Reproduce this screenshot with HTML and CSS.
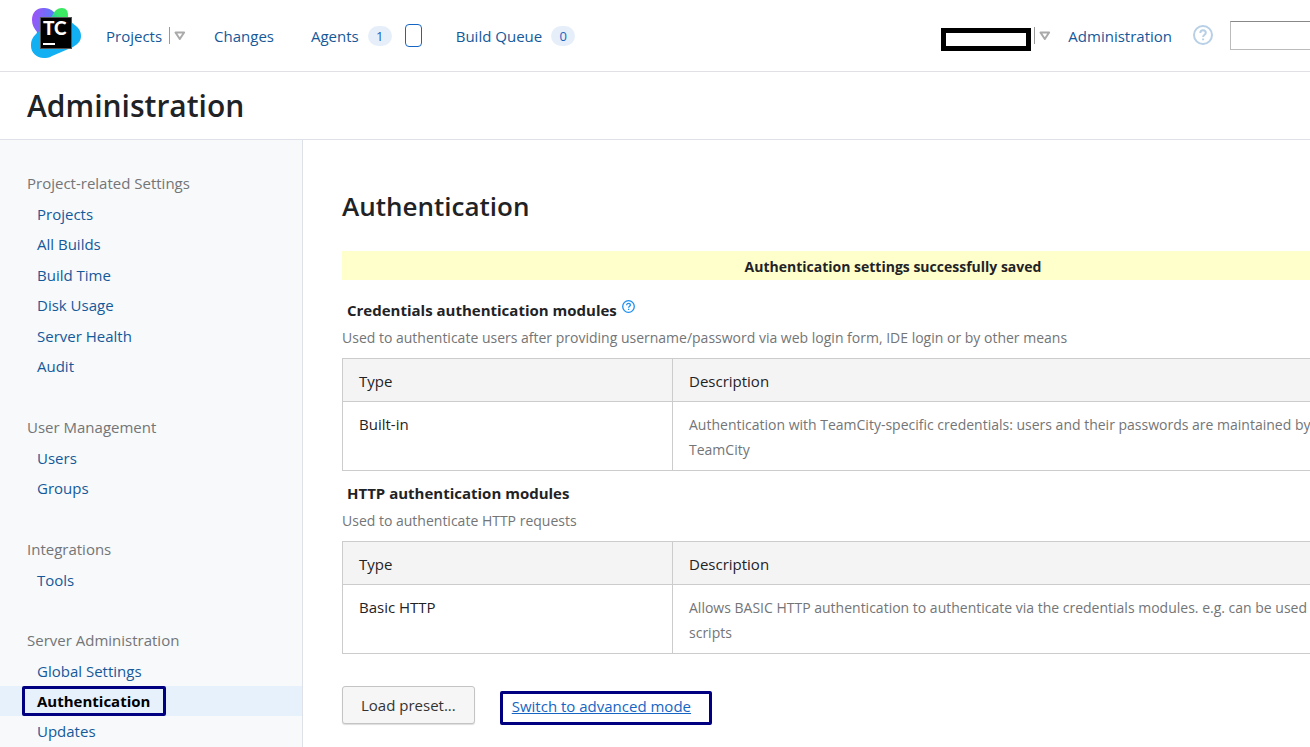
FILE: index.html
```html
<!DOCTYPE html>
<html lang="en">
<head>
<meta charset="utf-8">
<title>Administration - TeamCity</title>
<link rel="stylesheet" href="styles.css">
</head>
<body>
<div class="page">
  <header class="topbar">
    <a class="logo" href="#" aria-label="TeamCity">
      <svg width="52" height="52" viewBox="0 0 52 52">
        <defs>
          <linearGradient id="violet" x1="0" y1="0.3" x2="1" y2="0.6">
            <stop offset="0" stop-color="#9a55f8"/>
            <stop offset="0.6" stop-color="#4b83f6"/>
            <stop offset="1" stop-color="#12a8f2"/>
          </linearGradient>
          <linearGradient id="lime" x1="1" y1="0" x2="0" y2="1">
            <stop offset="0.4" stop-color="#3bea62"/>
            <stop offset="1" stop-color="#12b6e8"/>
          </linearGradient>
        </defs>
        <path d="M2 13C2 5 7 1 13 1c5 0 8 1 12 5l14 12-18 24L6 30l1-5C4 21 2 18 2 13z" fill="url(#violet)"/>
        <path d="M41 15l5 4c4 3 5 7 5 10 0 5-3 8-8 11L22 49c-3 2-6 2-8 2C6 51 1 45 1 39c0-5 1-8 5-12l14-12z" fill="#12aff2"/>
        <path d="M20 12l5-8c2-2 4-3 7-3 4 0 6 3 6 7v10H20z" fill="url(#lime)"/>
        <rect x="10" y="10" width="32" height="32" fill="#555"/>
        <rect x="11" y="11" width="30" height="30"/>
        <path d="M13 36h12v2H13z" fill="#fff"/>
        <text class="logo-text" x="13" y="28">TC</text>
      </svg>
    </a>
    <nav class="nav">
      <div class="nav-item">
        <a href="#">Projects</a>
        <button class="drop" aria-label="Choose a project"><svg width="12" height="10" viewBox="0 0 12 10"><path d="M1.5 1.5h8.6L5.8 8z"/></svg></button>
      </div>
      <a class="nav-item" href="#">Changes</a>
      <a class="nav-item agents" href="#">Agents <span class="count">1</span><span class="slot"></span></a>
      <a class="nav-item" href="#">Build Queue <span class="count">0</span></a>
    </nav>
    <div class="user">
      <span class="username"></span>
      <button class="drop" aria-label="User menu"><svg width="12" height="10" viewBox="0 0 12 10"><path d="M1.5 1.5h8.6L5.8 8z"/></svg></button>
      <a class="admin" href="#">Administration</a>
      <a class="help" href="#" aria-label="Help"><svg width="20" height="20" viewBox="0 0 20 20"><circle cx="10" cy="10" r="9"/><path d="M7.3 8c0-1.8 1-2.8 2.7-2.8s2.8 1 2.8 2.5c0 2-2.7 2-2.7 4.3M10.1 13.4v1.8"/></svg></a>
      <input class="search" type="text" aria-label="Search">
    </div>
  </header>

  <div class="titlebar"><h1>Administration</h1></div>

  <div class="columns">
    <nav class="sidebar" aria-label="Administration sections">
      <section>
        <h2>Project-related Settings</h2>
        <ul>
          <li><a href="#">Projects</a></li>
          <li><a href="#">All Builds</a></li>
          <li><a href="#">Build Time</a></li>
          <li><a href="#">Disk Usage</a></li>
          <li><a href="#">Server Health</a></li>
          <li><a href="#">Audit</a></li>
        </ul>
      </section>
      <section>
        <h2>User Management</h2>
        <ul>
          <li><a href="#">Users</a></li>
          <li><a href="#">Groups</a></li>
        </ul>
      </section>
      <section>
        <h2>Integrations</h2>
        <ul>
          <li><a href="#">Tools</a></li>
        </ul>
      </section>
      <section>
        <h2>Server Administration</h2>
        <ul>
          <li><a href="#">Global Settings</a></li>
          <li class="active"><a href="#">Authentication</a></li>
          <li><a href="#">Updates</a></li>
        </ul>
      </section>
    </nav>

    <main class="content">
      <h2 class="heading">Authentication</h2>
      <div class="message" role="status">Authentication settings successfully saved</div>

      <section class="modules">
        <h3>Credentials authentication modules
          <a class="hint" href="#" aria-label="Help on credentials modules"><svg width="13" height="13" viewBox="0 0 13 13"><circle cx="6.5" cy="6.5" r="5.8"/><path d="M4.7 5.2c0-1.2.7-1.8 1.8-1.8s1.9.6 1.9 1.6c0 1.3-1.8 1.3-1.8 2.7M6.6 8.8v1.2"/></svg></a>
        </h3>
        <p>Used to authenticate users after providing username/password via web login form, IDE login or by other means</p>
        <table>
          <thead><tr><th class="type">Type</th><th>Description</th></tr></thead>
          <tbody><tr><td>Built-in</td><td class="note">Authentication with TeamCity-specific credentials: users and their passwords are maintained by<br>TeamCity</td></tr></tbody>
        </table>
      </section>

      <section class="modules">
        <h3>HTTP authentication modules</h3>
        <p>Used to authenticate HTTP requests</p>
        <table>
          <thead><tr><th class="type">Type</th><th>Description</th></tr></thead>
          <tbody><tr><td>Basic HTTP</td><td class="note">Allows BASIC HTTP authentication to authenticate via the credentials modules. e.g. can be used in<br>scripts</td></tr></tbody>
        </table>
      </section>

      <div class="actions">
        <button class="preset">Load preset...</button>
        <a class="mode" href="#">Switch to advanced mode</a>
      </div>
    </main>
  </div>
</div>
</body>
</html>
```
FILE: styles.css
```css
* { box-sizing: border-box; }

html { overflow: hidden; }

body {
  margin: 0;
  background: #fff;
  color: #1f2326;
  font: 15px/24px "Open Sans", "Noto Sans", sans-serif;
}

h1, h2, h3, p, ul { margin: 0; padding: 0; }
ul { list-style: none; }
a { color: #15599a; text-decoration: none; }
button { font: inherit; cursor: pointer; }
svg { display: block; }

.page { min-width: 1460px; }

.topbar {
  display: flex;
  align-items: center;
  height: 72px;
  padding: 0 30px;
  border-bottom: 1px solid #dfe1e5;
}

.logo { margin: 0 24px 6px 0; }
.logo-text { font: 900 19px Lato, sans-serif; fill: #fff; }

.nav { display: flex; align-items: center; gap: 28px; }
.nav-item { display: flex; align-items: center; }

.drop {
  display: flex;
  align-items: center;
  height: 17px;
  margin-left: 7px;
  padding: 0 0 0 4px;
  border: 0;
  border-left: 1px solid #999;
  background: none;
}
.drop path { fill: none; stroke: #aaa; stroke-width: 2; stroke-linejoin: round; }

.count {
  width: 24px;
  height: 20px;
  margin-left: 9px;
  border-radius: 10px;
  background: #e6eff9;
  color: #1a61c0;
  font-size: 13px;
  line-height: 20px;
  text-align: center;
}
.agents { margin: 0 6px 0 9px; }
.slot {
  width: 17px;
  height: 23px;
  margin-left: 13px;
  border: 1px solid #1566c4;
  border-radius: 4px;
}

.user { display: flex; align-items: center; margin-left: auto; }
.username { width: 90px; height: 23px; margin-top: 8px; border: 5px solid #000; }
.user .drop { margin-left: 3px; }
.admin { margin-left: 17px; }
.help { margin: 0 0 2px 21px; }
.help svg { fill: none; stroke: #b7d0e6; stroke-width: 2; }
.search {
  width: 200px;
  height: 29px;
  margin-left: 17px;
  border: 1px solid #bbb;
  border-top-color: #888;
  background: #fff;
}

.titlebar { padding: 10px 27px 9px; border-bottom: 1px solid #dfe1e8; }
.titlebar h1 { font-size: 30px; line-height: 48px; font-weight: 600; }

.columns { display: flex; }

.sidebar {
  flex: none;
  width: 303px;
  padding: 28px 0 40px;
  border-right: 1px solid #dfe1e8;
  background: #f7f9fb;
}
.sidebar section { margin-bottom: 30px; }
.sidebar h2 {
  padding-left: 27px;
  color: #737577;
  font-size: 15px;
  font-weight: 400;
  line-height: 31px;
}
.sidebar li { padding-left: 37px; line-height: 30px; }
.sidebar li:nth-child(even) { line-height: 31px; }
.sidebar .active {
  display: flex;
  padding-left: 22px;
  background: #e6f1fc;
}
.active a {
  padding: 0 13px 0 12px;
  border: 3px solid #000080;
  border-radius: 2px;
  color: #000;
  font-weight: 700;
  line-height: 24px;
}

.content { flex: 1; padding: 48px 16px 40px 39px; }
.heading { margin-bottom: 27px; font-size: 26px; line-height: 36px; font-weight: 600; }

.message {
  margin-bottom: 18px;
  padding: 4px 0 1px;
  background: #ffffcc;
  font-size: 14px;
  font-weight: 700;
  text-align: center;
}

.modules { margin-bottom: 10px; }
.modules h3 {
  display: flex;
  gap: 5px;
  padding-left: 5px;
  font-size: 15px;
  font-weight: 700;
}
.modules p { margin: 4px 0 8px; color: #737577; font-size: 14px; }
.hint { padding-top: 2px; }
.hint svg { fill: none; stroke: #1e90f0; stroke-width: 1.3; }

table { width: 100%; border-collapse: collapse; }
th, td {
  padding: 10px 16px 8px;
  border: 1px solid #ccc;
  font-weight: 400;
  text-align: left;
  vertical-align: top;
}
th { background: #f4f4f4; }
td { line-height: 25px; }
.type { width: 330px; }
.note { color: #737577; font-size: 14px; }

.actions { display: flex; align-items: flex-start; gap: 25px; padding-top: 22px; }
.preset {
  height: 38px;
  padding: 0 18px;
  border: 1px solid #c4c4c4;
  border-radius: 3px;
  background: #f6f6f6;
  box-shadow: 0 1px 1px #ddd;
  color: #333;
}
.mode {
  margin-top: 5px;
  padding: 0 18px 4px 9px;
  border: 3px solid #000080;
  border-radius: 2px;
  color: #1566c4;
  text-decoration: underline;
}
```
